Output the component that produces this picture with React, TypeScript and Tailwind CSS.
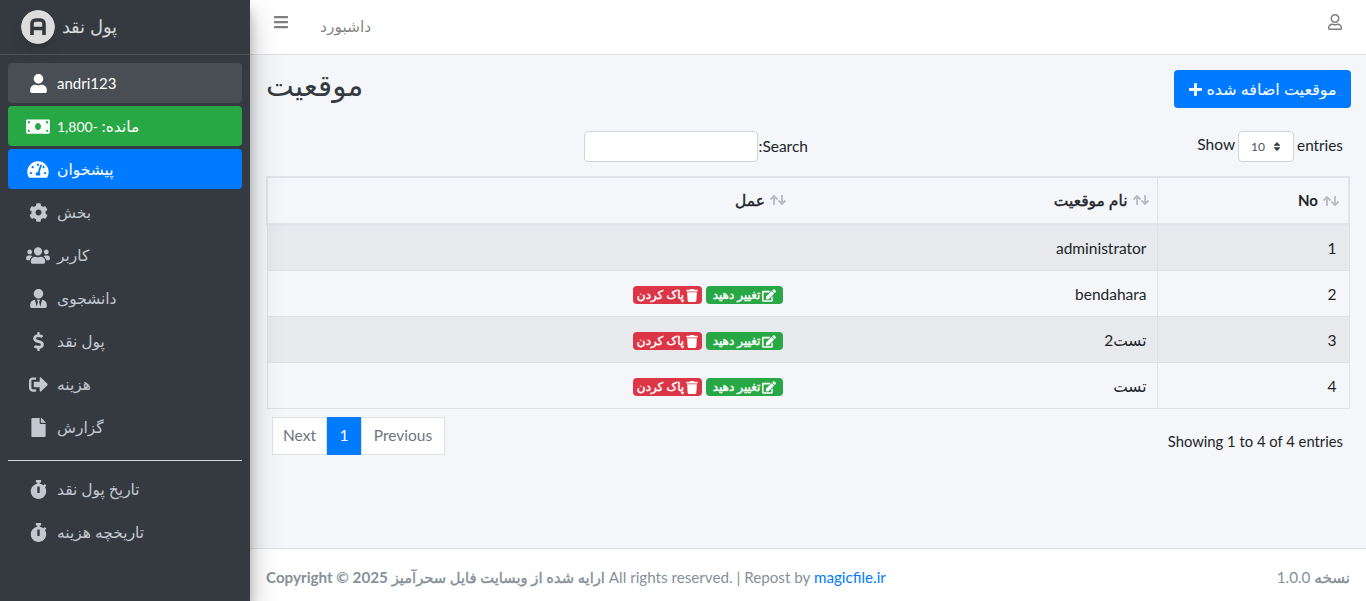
import React from "react";
import {
  FaBars,
  FaCog,
  FaDollarSign,
  FaEdit,
  FaFile,
  FaMoneyBill,
  FaPlus,
  FaRegUser,
  FaSignOutAlt,
  FaSort,
  FaStopwatch,
  FaTachometerAlt,
  FaTrash,
  FaUser,
  FaUsers,
  FaUserTie,
} from "react-icons/fa";

const menu = [
  { label: "بخش", icon: FaCog, size: "h-[19px] w-[19px]" },
  { label: "کاربر", icon: FaUsers, size: "h-[19px] w-[24px]" },
  { label: "دانشجوی", icon: FaUserTie, size: "h-[19px] w-[17px]" },
  { label: "پول نقد", icon: FaDollarSign, size: "h-[19px] w-[11px]" },
  { label: "هزینه", icon: FaSignOutAlt, size: "h-[19px] w-[19px]" },
  { label: "گزارش", icon: FaFile, size: "h-[19px] w-[15px]" },
];

const history = [
  { label: "تاریخ پول نقد", icon: FaStopwatch, size: "h-[19px] w-[17px]" },
  { label: "تاریخچه هزینه", icon: FaStopwatch, size: "h-[19px] w-[17px]" },
];

const rows = [
  { no: 1, name: "administrator", actions: false },
  { no: 2, name: "bendahara", actions: true },
  { no: 3, name: "تست2", actions: true },
  { no: 4, name: "تست", actions: true },
];

const NavItem = ({
  label,
  icon: Icon,
  size,
  className = "text-[#c2c7d0]",
}: {
  label: React.ReactNode;
  icon: React.ComponentType<{ className?: string }>;
  size: string;
  className?: string;
}) => (
  <div className={`flex h-10 items-center rounded pl-[17px] ${className}`}>
    <span className="flex w-[26px] justify-center">
      <Icon className={size} />
    </span>
    <span className="ml-[6px] pt-[2px] text-[15.5px]">{label}</span>
  </div>
);

const SortArrows = () => (
  <svg viewBox="0 0 17 10" className="h-[10px] w-[18px]" fill="none" stroke="#b9bcc0" strokeWidth="1.8">
    <path d="M4.500 10V1M1 4.500l3.500-3.500 3.500 3.500" />
    <path d="M12.500 0v9M9 5.500l3.500 3.500 3.500-3.500" />
  </svg>
);

// the persian bold in the screenshot keeps the regular widths
const heavy = "font-normal [-webkit-text-stroke:0.4px_currentColor]";

const HeadCell = ({
  label,
  textClass = heavy,
  className = "",
}: {
  label: string;
  textClass?: string;
  className?: string;
}) => (
  <th className={`text-right ${className}`}>
    <span className="inline-flex items-center gap-[4px]">
      <SortArrows />
      <span className={textClass}>{label}</span>
    </span>
  </th>
);

export default function App() {
  return (
    <div className="flex h-screen overflow-hidden bg-[#f4f6f9] font-['Lato','DejaVu_Sans',sans-serif] text-[15.5px] text-[#212529]">
      {/* sidebar */}
      <aside className="relative z-10 w-[250px] shrink-0 bg-[#343a40] shadow-[0_14px_28px_rgba(0,0,0,0.25),0_10px_10px_rgba(0,0,0,0.22)]">
        <div className="flex h-[55px] items-center gap-[7px] border-b border-[#4b545c] pl-[21px]">
          <svg viewBox="0 0 34 34" className="h-[34px] w-[34px] rounded-full shadow-lg">
            <circle cx="17" cy="17" r="17" fill="#dcdcdc" />
            <path
              d="M11 25V13.500A3.500 3.500 0 0 1 14.500 10h5a3.500 3.500 0 0 1 3.500 3.500V25M11 18.500h12"
              fill="none"
              stroke="#33383d"
              strokeWidth="3.6"
            />
          </svg>
          <span className="text-[17.5px] font-light text-white/80">پول نقد</span>
        </div>

        <nav className="flex flex-col gap-[3px] px-2 pt-2">
          <NavItem label={<span className="text-[15px]">andri123</span>} icon={FaUser} size="h-[19px] w-[17px]" className="bg-white/10 text-white" />
          <NavItem
            label={
              <>
                مانده: <span className="text-[14px]">-1,800</span>
              </>
            }
            icon={FaMoneyBill}
            size="h-[19px] w-[24px]"
            className="bg-[#28a745] text-white"
          />
          <NavItem label="پیشخوان" icon={FaTachometerAlt} size="h-[19px] w-[22px]" className="bg-[#007bff] text-white" />
          {menu.map((item) => (
            <NavItem key={item.label} {...item} />
          ))}
          <div className="mt-[10px] mb-[5px] border-t border-[#d0d4db]" />
          {history.map((item) => (
            <NavItem key={item.label} {...item} />
          ))}
        </nav>
      </aside>

      <div className="flex min-w-0 flex-1 flex-col">
        {/* top navbar */}
        <header className="flex h-[55px] shrink-0 items-center border-b border-[#dee2e6] bg-white px-[24px] text-black/50">
          <FaBars className="mb-[10px] h-4 w-[14px]" />
          <span className="ml-[32px] text-[15.5px]">داشبورد</span>
          <FaRegUser className="mb-[10px] ml-auto h-4 w-[14px]" />
        </header>

        {/* content */}
        <main className="flex-1 px-4 pt-[15px]">
          <div className="flex items-start justify-between">
            <h1 className="text-[29.5px] leading-[30px] font-medium text-[#343a40]">موقعیت</h1>
            <button dir="rtl" className="-mr-px flex h-[38px] w-[177px] items-center justify-center gap-[3px] rounded bg-[#007bff] text-white">
              <span className="text-[16px]">موقعیت اضافه شده</span>
              <FaPlus className="h-[15px] w-[15px]" />
            </button>
          </div>

          <div dir="rtl" className="mt-[23px] flex">
            <div className="flex w-1/2 items-center pr-[7px]">
              <div dir="ltr" className="flex items-center gap-[3px]">
                <span className="-mt-[3px] text-[15.5px]">Show</span>
                <span className="flex h-[31px] w-[56px] items-center justify-center gap-2 rounded border border-[#ced4da] bg-white text-[12px] text-[#495057]">
                  10
                  <FaSort className="h-[11px] w-[8px] text-[#343a40]" />
                </span>
                <span className="-mt-[3px] text-[15.3px]">entries</span>
              </div>
            </div>
            <div className="flex w-1/2 items-center">
              <span>Search:</span>
              <div className="h-[31px] w-[174px] rounded border border-[#ced4da] bg-white" />
            </div>
          </div>

          <table dir="rtl" className="mt-[14px] w-full table-fixed border-collapse border border-[#dee2e6]">
            <thead>
              <tr className="h-[47px] border-2 border-b-[3px] border-[#e1e4e8]">
                <HeadCell label="No" textClass="font-bold text-[15px]" className="w-[192px] border-l border-[#dee2e6] pr-[8px]" />
                <HeadCell label="نام موقعیت" className="w-[363px] pr-[7px]" />
                <HeadCell label="عمل" className="pr-[7px]" />
              </tr>
            </thead>
            <tbody>
              {rows.map((row) => (
                <tr key={row.no} className={`h-[46px] border-b border-[#dee2e6] ${row.no % 2 === 1 ? "bg-black/5" : ""}`}>
                  <td className="border-l border-[#dee2e6] px-3 pt-[3px]">{row.no}</td>
                  <td className="px-[10px] pt-[3px]">{row.name}</td>
                  <td className="px-[11px] pt-[4px]">
                    {row.actions && (
                      <div className="flex gap-1">
                        <span className="flex h-[18px] w-[77px] items-center justify-center gap-[2px] rounded bg-[#28a745] text-[12px] text-white">
                          <FaEdit className="h-[13px] w-[14px]" />
                          <span className={heavy}>تغییر دهید</span>
                        </span>
                        <span className="flex h-[18px] w-[69px] items-center justify-center gap-[2px] rounded bg-[#dc3545] text-[12px] text-white">
                          <FaTrash className="h-[13px] w-[12px]" />
                          <span className={heavy}>پاک کردن</span>
                        </span>
                      </div>
                    )}
                  </td>
                </tr>
              ))}
            </tbody>
          </table>

          <div dir="rtl" className="mt-[8px] flex items-center justify-between pr-[7px] pl-[6px]">
            <span className="pt-[12px] text-[14.8px]">Showing 1 to 4 of 4 entries</span>
            <div className="flex h-[38px] text-[#6c757d]">
              <span className="flex w-[84px] items-center justify-center border border-[#dee2e6] bg-white pt-px">Previous</span>
              <span className="flex w-[34px] items-center justify-center bg-[#007bff] pt-px text-white">1</span>
              <span className="flex w-[55px] items-center justify-center border border-[#dee2e6] bg-white pt-px">Next</span>
            </div>
          </div>
        </main>

        {/* footer */}
        <footer className="flex h-[53px] shrink-0 items-center justify-between border-t border-[#dee2e6] bg-white px-4 pt-[5px] text-[15.2px] text-[#869099]">
          <span>
            <strong>Copyright © 2025</strong>{" "}
            <span className={`text-[14.7px] ${heavy}`}>ارایه شده از وبسایت فایل سحرآمیز</span> All rights reserved. | Repost by{" "}
            <span className="text-[#007bff]">magicfile.ir</span>
          </span>
          <span dir="rtl">
            <span className={heavy}>نسخه</span> 1.0.0
          </span>
        </footer>
      </div>
    </div>
  );
}
